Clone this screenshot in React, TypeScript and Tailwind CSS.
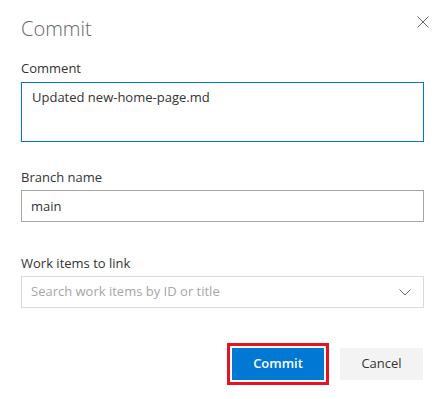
import React, { useState } from "react"

export default function App() {
  const [comment, setComment] = useState("Updated new-home-page.md")
  const [branch, setBranch] = useState("main")

  return (
    <div className="w-[446px] h-[399px] bg-white font-['Open_Sans',sans-serif] text-[#333]">
      <div className="flex items-start justify-between pl-[21px] pr-[16px] pt-[15px]">
        <h1 className="text-[20px] leading-[28px] font-light text-[#666]">Commit</h1>
        <button className="mt-[0px] p-[1px] text-[#666]">
          <svg width="12" height="12" viewBox="0 0 12 12" fill="none" stroke="currentColor" strokeWidth="1">
            <path d="M0.5 0.5L11.5 11.5M11.5 0.5L0.5 11.5" />
          </svg>
        </button>
      </div>

      <div className="flex flex-col px-[21px] pr-[22px] mt-[16px]">
        <label className="text-[13px] leading-[18px] text-[#333]">Comment</label>
        <textarea
          className="mt-[5px] h-[60px] resize-none border border-[#0078d4] px-[10px] py-[4px] text-[13px] leading-[20px] text-[#333] outline-none"
          value={comment}
          onChange={(e) => setComment(e.target.value)}
        />

        <label className="mt-[26px] text-[13px] leading-[18px] text-[#333]">Branch name</label>
        <input
          className="mt-[4px] h-[32px] border border-[#a6a6a6] px-[9px] text-[13px] text-[#333] outline-none"
          value={branch}
          onChange={(e) => setBranch(e.target.value)}
        />

        <label className="mt-[32px] text-[13px] leading-[18px] text-[#333]">Work items to link</label>
        <div className="mt-[4px] flex h-[32px] items-center border border-[#dadada] pl-[9px] pr-[12px]">
          <input
            className="flex-1 text-[13px] text-[#333] placeholder:text-[#a6a6a6] outline-none"
            placeholder="Search work items by ID or title"
          />
          <svg width="12" height="7" viewBox="0 0 12 7" fill="none" stroke="#666" strokeWidth="1">
            <path d="M0.5 0.5L6 6L11.5 0.5" />
          </svg>
        </div>

        <div className="mt-[35px] flex items-center justify-end gap-[11px] pr-[1px]">
          <div className="border-[3px] border-[#e81123] p-[2px]">
            <button className="block h-[32px] w-[92px] bg-[#0078d4] text-[13px] font-semibold text-white">Commit</button>
          </div>
          <button className="h-[32px] w-[83px] bg-[#f3f3f3] text-[13px] text-[#333]">Cancel</button>
        </div>
      </div>
    </div>
  )
}
